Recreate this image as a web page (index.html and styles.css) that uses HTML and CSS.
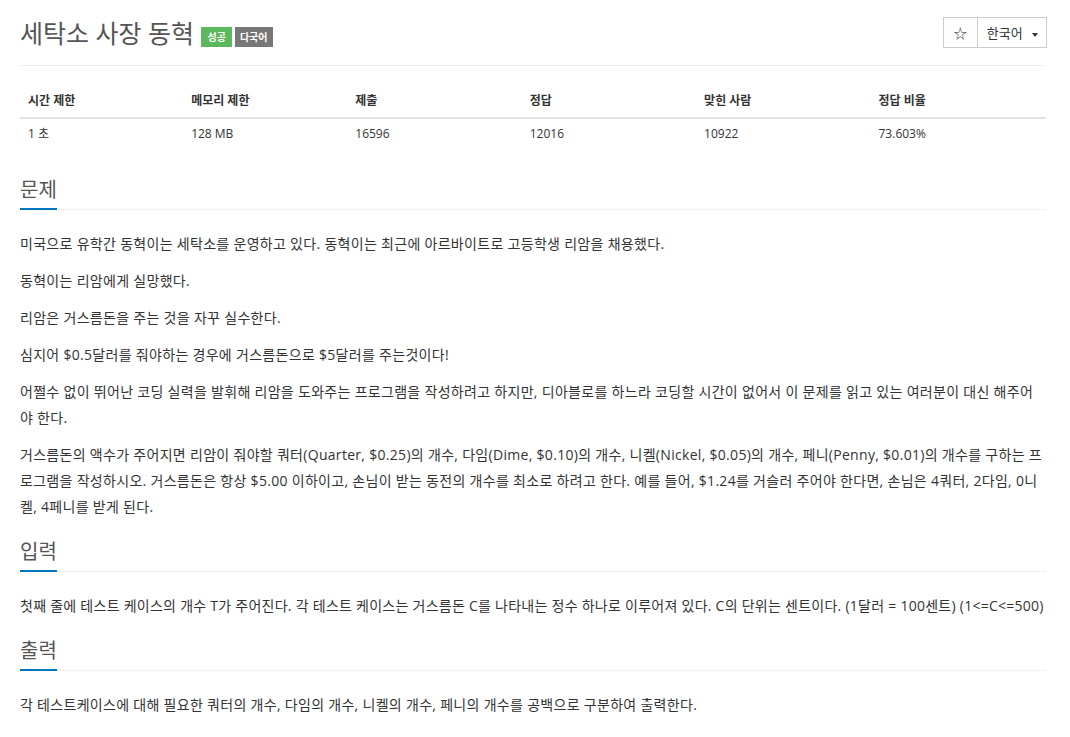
FILE: index.html
```html
<!DOCTYPE html>
<html lang="ko">
<head>
    <meta charset="UTF-8">
    <title>세탁소 사장 동혁</title>
    <link rel="stylesheet" href="styles.css">
</head>
<body>
    <div class="page">
        <div class="page-header">
            <h1 class="problem-title">세탁소 사장 동혁
                <span class="label label-success">성공</span><span class="label label-default">다국어</span>
            </h1>
            <div class="btn-group">
                <button class="btn">&#9734;</button>
                <button class="btn">한국어 <span class="caret"></span></button>
            </div>
        </div>

        <table class="problem-info">
            <thead>
                <tr>
                    <th>시간 제한</th>
                    <th>메모리 제한</th>
                    <th>제출</th>
                    <th>정답</th>
                    <th>맞힌 사람</th>
                    <th>정답 비율</th>
                </tr>
            </thead>
            <tbody>
                <tr>
                    <td>1 초</td>
                    <td>128 MB</td>
                    <td>16596</td>
                    <td>12016</td>
                    <td>10922</td>
                    <td>73.603%</td>
                </tr>
            </tbody>
        </table>

        <section class="problem-section">
            <div class="headline"><h2>문제</h2></div>
            <div class="problem-text">
                <p>미국으로 유학간 동혁이는 세탁소를 운영하고 있다. 동혁이는 최근에 아르바이트로 고등학생 리암을 채용했다.</p>
                <p>동혁이는 리암에게 실망했다.</p>
                <p>리암은 거스름돈을 주는 것을 자꾸 실수한다.</p>
                <p>심지어 $0.5달러를 줘야하는 경우에 거스름돈으로 $5달러를 주는것이다!</p>
                <p>어쩔수 없이 뛰어난 코딩 실력을 발휘해 리암을 도와주는 프로그램을 작성하려고 하지만, 디아블로를 하느라 코딩할 시간이 없어서 이 문제를 읽고 있는 여러분이 대신 해주어야 한다.</p>
                <p>거스름돈의 액수가 주어지면 리암이 줘야할 쿼터(Quarter, $0.25)의 개수, 다임(Dime, $0.10)의 개수, 니켈(Nickel, $0.05)의 개수, 페니(Penny, $0.01)의 개수를 구하는 프로그램을 작성하시오. 거스름돈은 항상 $5.00 이하이고, 손님이 받는 동전의 개수를 최소로 하려고 한다. 예를 들어, $1.24를 거슬러 주어야 한다면, 손님은 4쿼터, 2다임, 0니켈, 4페니를 받게 된다.</p>
            </div>
        </section>

        <section class="problem-section problem-input">
            <div class="headline"><h2>입력</h2></div>
            <div class="problem-text">
                <p>첫째 줄에 테스트 케이스의 개수 T가 주어진다. 각 테스트 케이스는 거스름돈 C를 나타내는 정수 하나로 이루어져 있다. C의 단위는 센트이다. (1달러 = 100센트) (1&lt;=C&lt;=500)</p>
            </div>
        </section>

        <section class="problem-section">
            <div class="headline"><h2>출력</h2></div>
            <div class="problem-text">
                <p>각 테스트케이스에 대해 필요한 쿼터의 개수, 다임의 개수, 니켈의 개수, 페니의 개수를 공백으로 구분하여 출력한다.</p>
            </div>
        </section>
    </div>
</body>
</html>
```

FILE: styles.css
```css
body {
    margin: 0;
    background-color: #fff;
    color: #333;
    font-family: "Open Sans", "Noto Sans CJK KR", sans-serif;
    font-size: 13px;
}

.page {
    padding: 0 24px 0 20px;
}

.page-header {
    display: flex;
    justify-content: space-between;
    align-items: flex-start;
    padding-top: 14px;
    padding-bottom: 13px;
    border-bottom: 1px solid #eee;
}

.problem-title {
    margin: 0;
    font-size: 25px;
    font-weight: 400;
    color: #555;
    line-height: 38px;
}

.label {
    display: inline-block;
    vertical-align: 2px;
    font-size: 10px;
    font-weight: 700;
    color: #fff;
    line-height: 12px;
    padding: 4px 6px;
    margin-left: 1px;
}

.label-success {
    background-color: #5cb85c;
}

.label-default {
    background-color: #777;
    margin-left: 3px;
    padding: 4px 5px;
}

.btn-group {
    display: flex;
    margin-top: 3px;
    margin-right: -1px;
}

.btn {
    font-family: "Open Sans", "Noto Sans CJK KR", sans-serif;
    font-size: 13px;
    color: #333;
    background-color: #fff;
    border: 1px solid #ccc;
    height: 31px;
    padding: 0 10px;
    cursor: pointer;
}

.btn + .btn {
    border-left: none;
    padding: 0 8px 0 9px;
}

.caret {
    display: inline-block;
    width: 0;
    height: 0;
    margin-left: 6px;
    vertical-align: middle;
    border-top: 4px solid #333;
    border-left: 3px solid transparent;
    border-right: 3px solid transparent;
}

.problem-info {
    width: 100%;
    border-collapse: collapse;
    margin-top: 18px;
    margin-bottom: 26px;
    font-size: 12px;
}

.problem-info th {
    text-align: left;
    font-weight: 700;
    padding: 7px 8px 8px;
    border-bottom: 2px solid #e2e2e2;
}

.problem-info td {
    padding: 5px 8px 8px;
}

.problem-info th:nth-child(1) { width: 15.9%; }
.problem-info th:nth-child(2) { width: 16%; }
.problem-info th:nth-child(3) { width: 17%; }
.problem-info th:nth-child(4) { width: 17%; }
.problem-info th:nth-child(5) { width: 17%; }

.problem-section {
    margin-top: 18px;
}

.headline {
    border-bottom: 1px dotted #e4e4e4;
    margin-bottom: 21px;
}

.headline h2 {
    display: inline-block;
    margin: 0 0 -1px;
    padding-bottom: 4px;
    font-size: 20px;
    font-weight: 400;
    color: #555;
    line-height: 28px;
    border-bottom: 2px solid #0076c0;
}

.problem-text {
    font-size: 14px;
    line-height: 26px;
    letter-spacing: 0.3px;
}

.problem-input .problem-text {
    letter-spacing: 0.26px;
}

.problem-text p {
    margin: 0 0 11px;
}

.problem-text p:last-child {
    margin-bottom: 0;
}
```
